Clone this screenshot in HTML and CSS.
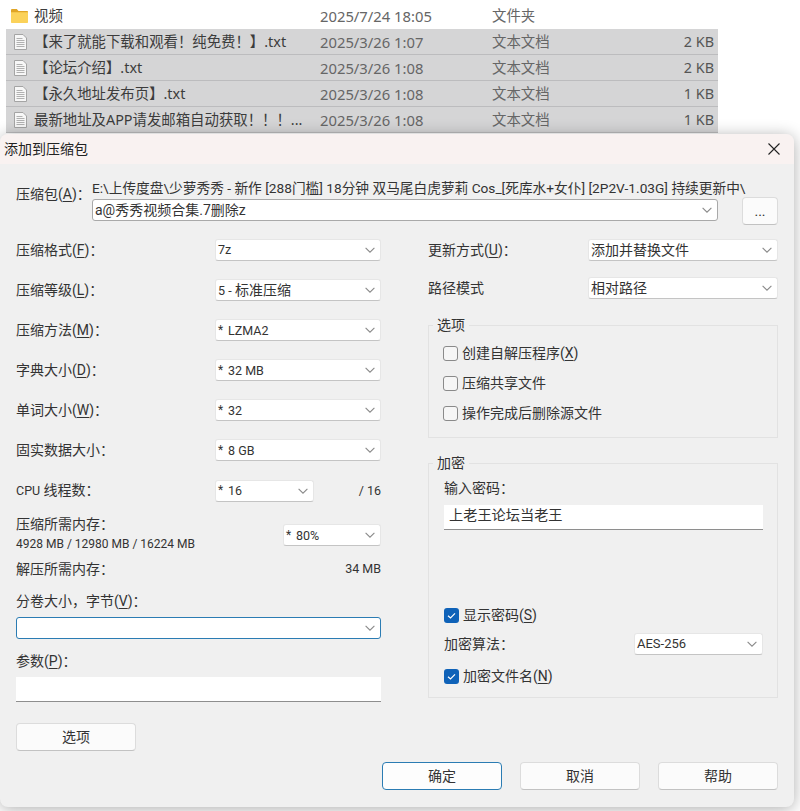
FILE: index.html
```html
<!DOCTYPE html>
<html lang="zh-CN">
<head>
<meta charset="utf-8">
<title>添加到压缩包</title>
<link rel="stylesheet" href="styles.css">
</head>
<body>
<svg class="defs" width="0" height="0" aria-hidden="true">
  <symbol id="chev" viewBox="0 0 10 6"><path d="M.6.8 5 5.2 9.4.8" fill="none" stroke="#8a8a8a" stroke-width="1.1"/></symbol>
  <symbol id="doc" viewBox="0 0 15 16"><path d="M1.5.5h8.5l3.5 3.5v11.5h-12z" fill="#f7f7f7" stroke="#a4a4a4"/><path d="M3.5 4.5h6M3.5 6.5h8M3.5 8.5h8M3.5 10.5h8M3.5 12.5h8" stroke="#a8a8a8" stroke-width=".9"/></symbol>
  <symbol id="tick" viewBox="0 0 15 15"><rect width="15" height="15" rx="3" fill="#0f62b8"/><path d="M4 7.8 6.5 10 11 5.3" fill="none" stroke="#fff" stroke-width="1.2"/></symbol>
</svg>

<section class="files">
  <div class="file">
    <svg class="icon" viewBox="0 0 17 14"><path d="M0 1.2C0 .5.5 0 1.2 0h4.6l1.7 2H16c.6 0 1 .4 1 1v1H0z" fill="#e0a526"/><path d="M0 3.2h17V13c0 .6-.4 1-1 1H1c-.6 0-1-.4-1-1z" fill="#fbd25a"/></svg>
    <span class="name">视频</span><span class="date">2025/7/24 18:05</span><span class="type">文件夹</span><span class="size"></span>
  </div>
  <div class="file sel">
    <svg class="icon doc"><use href="#doc"/></svg>
    <span class="name">【来了就能下载和观看！纯免费！】.txt</span><span class="date">2025/3/26 1:07</span><span class="type">文本文档</span><span class="size">2 KB</span>
  </div>
  <div class="file sel">
    <svg class="icon doc"><use href="#doc"/></svg>
    <span class="name">【论坛介绍】.txt</span><span class="date">2025/3/26 1:08</span><span class="type">文本文档</span><span class="size">2 KB</span>
  </div>
  <div class="file sel">
    <svg class="icon doc"><use href="#doc"/></svg>
    <span class="name">【永久地址发布页】.txt</span><span class="date">2025/3/26 1:08</span><span class="type">文本文档</span><span class="size">1 KB</span>
  </div>
  <div class="file sel">
    <svg class="icon doc"><use href="#doc"/></svg>
    <span class="name">最新地址及APP请发邮箱自动获取！！！...</span><span class="date">2025/3/26 1:08</span><span class="type">文本文档</span><span class="size">1 KB</span>
  </div>
</section>

<section class="dialog">
  <header class="titlebar">
    <span>添加到压缩包</span>
    <svg class="close" viewBox="0 0 12 12"><path d="M.5.5l11 11M11.5.5l-11 11" stroke="#222" stroke-width="1.1"/></svg>
  </header>

  <div class="archive">
    <span class="archive-label">压缩包(<u>A</u>)：</span>
    <div class="archive-main">
      <div class="path">E:\上传度盘\少萝秀秀 - 新作 [288门槛] 18分钟 双马尾白虎萝莉 Cos_[死库水+女仆] [2P2V-1.03G] 持续更新中\</div>
      <div class="select strong"><span>a@秀秀视频合集.7删除z</span><svg class="chev"><use href="#chev"/></svg></div>
    </div>
    <button class="btn browse">...</button>
  </div>

  <div class="columns">
    <div class="left">
      <div class="row"><span>压缩格式(<u>F</u>)：</span><div class="select w166"><span class="lt">7z</span><svg class="chev"><use href="#chev"/></svg></div></div>
      <div class="row"><span>压缩等级(<u>L</u>)：</span><div class="select w166"><span><span class="lt">5 -</span> 标准压缩</span><svg class="chev"><use href="#chev"/></svg></div></div>
      <div class="row"><span>压缩方法(<u>M</u>)：</span><div class="select w166"><span class="lt"><i>*</i>LZMA2</span><svg class="chev"><use href="#chev"/></svg></div></div>
      <div class="row"><span>字典大小(<u>D</u>)：</span><div class="select w166"><span class="lt"><i>*</i>32 MB</span><svg class="chev"><use href="#chev"/></svg></div></div>
      <div class="row"><span>单词大小(<u>W</u>)：</span><div class="select w166"><span class="lt"><i>*</i>32</span><svg class="chev"><use href="#chev"/></svg></div></div>
      <div class="row"><span>固实数据大小：</span><div class="select w166"><span class="lt"><i>*</i>8 GB</span><svg class="chev"><use href="#chev"/></svg></div></div>
      <div class="row cpu">
        <span class="cpu-label"><span class="lt">CPU</span> 线程数：</span>
        <div class="select w99"><span class="lt"><i>*</i>16</span><svg class="chev"><use href="#chev"/></svg></div>
        <span class="push lt">/ 16</span>
      </div>
      <div class="row memory">
        <div class="memory-text"><span>压缩所需内存：</span><small>4928 MB / 12980 MB / 16224 MB</small></div>
        <div class="select w98"><span class="lt"><i>*</i>80%</span><svg class="chev"><use href="#chev"/></svg></div>
      </div>
      <div class="row unpack"><span>解压所需内存：</span><span class="lt">34 MB</span></div>
      <div class="field-label volume">分卷大小，字节(<u>V</u>)：</div>
      <div class="select focus"><span></span><svg class="chev"><use href="#chev"/></svg></div>
      <div class="field-label params">参数(<u>P</u>)：</div>
      <div class="textbox"></div>
      <button class="btn options">选项</button>
    </div>

    <div class="right">
      <div class="row"><span>更新方式(<u>U</u>)：</span><div class="select w190"><span>添加并替换文件</span><svg class="chev"><use href="#chev"/></svg></div></div>
      <div class="row second"><span>路径模式</span><div class="select w190"><span>相对路径</span><svg class="chev"><use href="#chev"/></svg></div></div>

      <div class="group opts">
        <span class="legend">选项</span>
        <label class="check"><span class="box"></span>创建自解压程序(<u>X</u>)</label>
        <label class="check"><span class="box"></span>压缩共享文件</label>
        <label class="check"><span class="box"></span>操作完成后删除源文件</label>
      </div>

      <div class="group crypt">
        <span class="legend">加密</span>
        <div class="pw-label">输入密码：</div>
        <div class="textbox pw">上老王论坛当老王</div>
        <label class="check show"><svg class="tick"><use href="#tick"/></svg>显示密码(<u>S</u>)</label>
        <div class="algo"><span>加密算法：</span><div class="select w129"><span class="aes">AES-256</span><svg class="chev"><use href="#chev"/></svg></div></div>
        <label class="check encname"><svg class="tick"><use href="#tick"/></svg>加密文件名(<u>N</u>)</label>
      </div>
    </div>
  </div>

  <footer class="actions">
    <button class="btn primary">确定</button>
    <button class="btn">取消</button>
    <button class="btn">帮助</button>
  </footer>
</section>
</body>
</html>
```
FILE: styles.css
```css
* { box-sizing: border-box; }
html, body { margin: 0; height: 811px; overflow: hidden; background: #fff; }
body {
  font: 14px/20px "Noto Sans", "Noto Sans CJK SC", sans-serif;
  color: #333;
}
.defs { position: absolute; }
u { text-underline-offset: 2px; }
i { display: inline-block; width: 10px; font-style: normal; font-size: 12px; vertical-align: 1px; }

/* file list */
.files { width: 712px; margin-left: 6px; padding-top: 3px; height: 134px; }
.file {
  display: grid;
  grid-template-columns: 28px 286px 172px 1fr 60px;
  align-items: center;
  height: 26px;
  font-size: 14.4px;
  color: #3c3c3c;
}
.file.sel { background: #d5d5d6; border-bottom: 1px solid #bcbcbe; }
.icon { width: 17px; height: 14px; margin-left: 5px; }
.icon.doc { width: 15px; height: 16px; margin-left: 7px; }
.name { white-space: nowrap; }
.date, .type { color: #666; }
.date { font-size: 14.8px; }
.size { color: #555; text-align: right; padding-right: 4px; }

/* dialog */
.dialog {
  position: relative;
  width: 794px;
  height: 673px;
  background: #f0f0f0;
  border-radius: 8px;
  box-shadow: 0 2px 16px rgba(0, 0, 0, .32);
  font-family: Roboto, "Noto Sans CJK SC", sans-serif;
}
.titlebar {
  display: flex;
  align-items: center;
  justify-content: space-between;
  height: 30px;
  padding: 0 14px 0 4px;
  background: #f9f2f1;
  border-radius: 8px 8px 0 0;
  color: #222;
}
.close { width: 12px; height: 12px; }

.archive { display: flex; padding: 14px 16px 0; height: 66px; }
.archive-label { width: 76px; padding-top: 6px; flex: none; }
.archive-main { width: 626px; flex: none; }
.path { font-size: 13.7px; line-height: 20px; white-space: nowrap; height: 21px; }
.browse { width: 36px; height: 27px; margin: 19px 0 0 24px; flex: none; color: #555; line-height: 14px; font-size: 12px; }

.select {
  display: flex;
  align-items: center;
  justify-content: space-between;
  height: 22px;
  padding: 0 5px 0 2px;
  background: #fff;
  border: 1px solid #e6e6e6;
  border-bottom-color: #c4c4c4;
  border-radius: 3px;
  white-space: nowrap;
}
.select.strong { border-color: #a9a9a9; }
.select.focus { border-color: #2b7cb3; }
.chev { width: 10px; height: 6px; flex: none; }
.w166 { width: 166px; }
.w99 { width: 99px; }
.w98 { width: 98px; }
.w190 { width: 190px; }
.w129 { width: 129px; }
.lt { font-size: 12.5px; }
.aes { font-size: 13px; }

.columns { display: flex; height: 532px; padding: 0 15px 0 16px; }
.left { width: 365px; margin-right: 47px; flex: none; }
.right { width: 350px; flex: none; }
.row { display: flex; align-items: center; justify-content: space-between; height: 40px; }
.cpu { height: 41px; justify-content: flex-start; }
.cpu-label { width: 199px; }
.push { margin-left: auto; }
.memory { height: 44px; margin-top: 2px; }
.memory-text { display: flex; flex-direction: column; margin-top: -3px; }
.memory-text small { font-size: 12px; line-height: 20px; }
.unpack { height: 24px; }
.field-label { height: 20px; }
.volume { margin: 10px 0 6px; }
.params { margin: 12px 0 6px; }
.textbox {
  height: 25px;
  background: #fff;
  border-bottom: 1px solid #8e8e8e;
}
.options { display: block; width: 120px; height: 28px; margin-top: 21px; }

.second { height: 36px; }
.group {
  position: relative;
  width: 350px;
  border: 1px solid #e2e2e2;
}
.legend {
  position: absolute;
  top: -11px;
  left: 4px;
  padding: 0 4px;
  background: #f0f0f0;
}
.opts { height: 113px; margin-top: 19px; padding: 12px 14px 0; }
.crypt { height: 235px; margin-top: 25px; padding: 14px 14px 0 15px; }
.check { display: flex; align-items: center; height: 30px; }
.box {
  width: 15px;
  height: 15px;
  margin-right: 4px;
  border: 1px solid #8a8a8a;
  border-radius: 3px;
  background: #f6f6f6;
}
.tick { width: 15px; height: 15px; margin-right: 4px; }
.pw-label { height: 20px; margin-bottom: 7px; }
.pw { width: 319px; padding-left: 5px; line-height: 21px; font-size: 14.2px; }
.show { height: 20px; margin-top: 75px; }
.algo { display: flex; align-items: center; justify-content: space-between; width: 319px; margin-top: 8px; }
.encname { height: 20px; margin-top: 11px; }

.btn {
  height: 28px;
  padding: 0;
  background: #fbfbfb;
  border: 1px solid #dcdcdc;
  border-bottom-color: #c2c2c2;
  border-radius: 4px;
  font: inherit;
  color: #333;
}
.btn.primary { border-color: #2b7cb3; background: #fdfdfd; }
.actions { display: flex; justify-content: flex-end; gap: 18px; padding-right: 16px; }
.actions .btn { width: 120px; }
```
